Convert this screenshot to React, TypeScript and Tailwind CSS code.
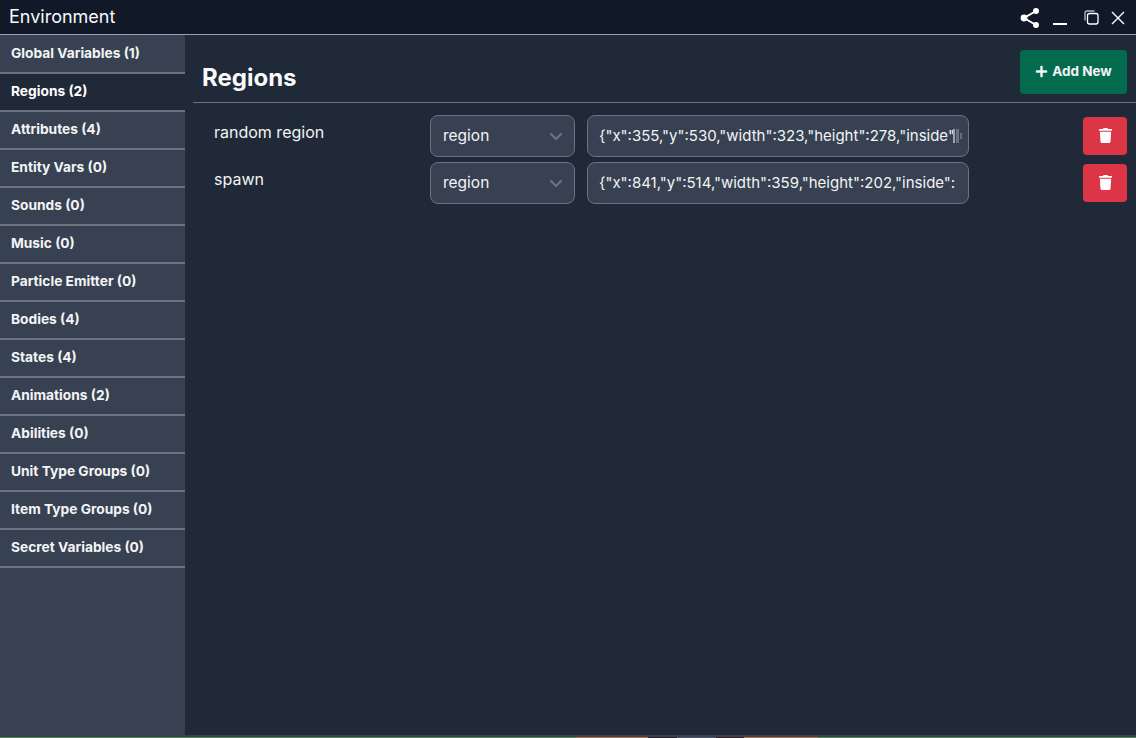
import { FaPlus, FaTrash } from "react-icons/fa";

const items = [
  "Global Variables (1)",
  "Regions (2)",
  "Attributes (4)",
  "Entity Vars (0)",
  "Sounds (0)",
  "Music (0)",
  "Particle Emitter (0)",
  "Bodies (4)",
  "States (4)",
  "Animations (2)",
  "Abilities (0)",
  "Unit Type Groups (0)",
  "Item Type Groups (0)",
  "Secret Variables (0)",
];

const rows = [
  { name: "random region", value: '{"x":355,"y":530,"width":323,"height":278,"inside":"#000000","alpha":1}', marker: true },
  { name: "spawn", value: '{"x":841,"y":514,"width":359,"height":202,"inside":"","alpha":1}', marker: false },
];

function Row({ name, value, marker }: { name: string; value: string; marker: boolean }) {
  return (
    <div className="flex h-[47px] items-start">
      <div className="w-[237px] shrink-0 pl-[21px] pt-[5px] text-[16px] leading-[24px] text-[#f3f4f6]">{name}</div>
      <div className="flex h-[42px] w-[145px] shrink-0 items-center justify-between rounded-lg border border-[#6b7280] bg-[#374151] pl-3 pr-[6px] text-[15.5px] text-[#f3f4f6]">
        <span>region</span>
        <svg width="24" height="24" viewBox="0 0 24 24" fill="none" stroke="#6b7280" strokeWidth="2.2" strokeLinecap="round" strokeLinejoin="round">
          <path d="M7 10l5 5 5-5" />
        </svg>
      </div>
      <div className="relative ml-3 flex h-[42px] w-[382px] shrink-0 items-center overflow-hidden rounded-lg border border-[#6b7280] bg-[#374151] pl-[11px] pr-[12px] text-[15px] text-[#f3f4f6]">
        <span className="block overflow-hidden whitespace-nowrap">{value}</span>
        {marker && (
          <svg className="absolute left-[365px] top-[13px] bg-[#374151]" width="10" height="14" viewBox="0 0 10 14">
            <rect x="0" y="0" width="2" height="14" fill="#9ca3af" />
            <rect x="3" y="0" width="3" height="14" fill="#6b7280" />
            <rect x="7" y="4" width="2" height="6" fill="#6b7280" />
          </svg>
        )}
      </div>
      <div className="ml-auto mr-[9px] mt-[2px] flex h-[38px] w-[44px] items-center justify-center rounded-[4px] bg-[#dc3545] pb-[1px] text-white">
        <FaTrash size={15} />
      </div>
    </div>
  );
}

export default function App() {
  return (
    <div className="flex h-[738px] w-[1136px] flex-col overflow-hidden bg-[#1f2937] font-['Inter',sans-serif]">
      <header className="flex h-[35px] shrink-0 items-center justify-between border-b border-[#9ca3af] bg-[#111827] pl-[9px] pr-[11px]">
        <span className="pb-[2px] text-[18px] text-[#f9fafb]">Environment</span>
        <div className="flex items-center text-white">
          <svg width="22" height="22" viewBox="0 0 22 22" fill="#fff" stroke="#fff" strokeWidth="2">
            <path d="M16 5L4 12l12 7" fill="none" />
            <circle cx="16" cy="5" r="2" />
            <circle cx="4" cy="12" r="2.4" />
            <circle cx="16" cy="19" r="2" />
          </svg>
          <svg className="ml-[11px] mt-[14px]" width="14" height="2" viewBox="0 0 14 2"><rect width="14" height="2" fill="#fff" /></svg>
          <svg className="ml-[17px] mt-[1px]" width="15" height="15" viewBox="0 0 15 15" fill="none" stroke="#fff" strokeWidth="1.3">
            <rect x="3.5" y="3.5" width="10.5" height="10.5" rx="2" />
            <path d="M1 10.5V3a2 2 0 0 1 2-2h7.5" stroke="#b8bcc4" />
          </svg>
          <svg className="ml-[12px] mt-[1px]" width="14" height="14" viewBox="0 0 14 14" fill="none" stroke="#fff" strokeWidth="1.4">
            <path d="M1 1l12 12M13 1L1 13" />
          </svg>
        </div>
      </header>
      <div className="flex min-h-0 flex-1">
        <nav className="w-[185px] shrink-0 bg-[#374151] pt-[1px]">
          {items.map((item, i) => (
            <div
              key={item}
              className={`flex h-[38px] items-center border-b-2 border-[#6b7280] pb-[1px] pl-[11px] text-[13.75px] font-bold ${
                i === 1 ? "bg-[#1f2937] text-white" : "text-[#f3f4f6]"
              }`}
            >
              {item}
            </div>
          ))}
        </nav>
        <main className="min-w-0 flex-1 pl-[8px]">
          <div className="flex h-[68px] items-start justify-between border-b border-[#6b7280]">
            <h1 className="pl-[9px] pt-[26px] text-[24px] font-bold leading-[34px] text-[#f9fafb]">Regions</h1>
            <button className="mr-[9px] mt-[15px] flex h-[44px] w-[107px] items-center justify-center gap-[4px] rounded-[4px] bg-[#046c4e] pb-[1px] text-[13.5px] font-bold text-[#f3f4f6]">
              <FaPlus size={13} />
              Add New
            </button>
          </div>
          <div className="pt-[12px]">
            {rows.map((r) => (
              <Row key={r.name} {...r} />
            ))}
          </div>
        </main>
      </div>
      <div className="h-[2px] shrink-0 bg-[#374151]" />
      <div className="flex h-[1px] shrink-0 bg-[#4d8a4a]">
        <div className="w-[576px]" />
        <div className="w-[72px] bg-[#b5703f]" />
        <div className="w-[29px] bg-[#2a1c22]" />
        <div className="w-[39px] bg-[#4f5568]" />
        <div className="w-[28px] bg-[#3a1c1c]" />
        <div className="w-[74px] bg-[#b5703f]" />
      </div>
    </div>
  );
}
